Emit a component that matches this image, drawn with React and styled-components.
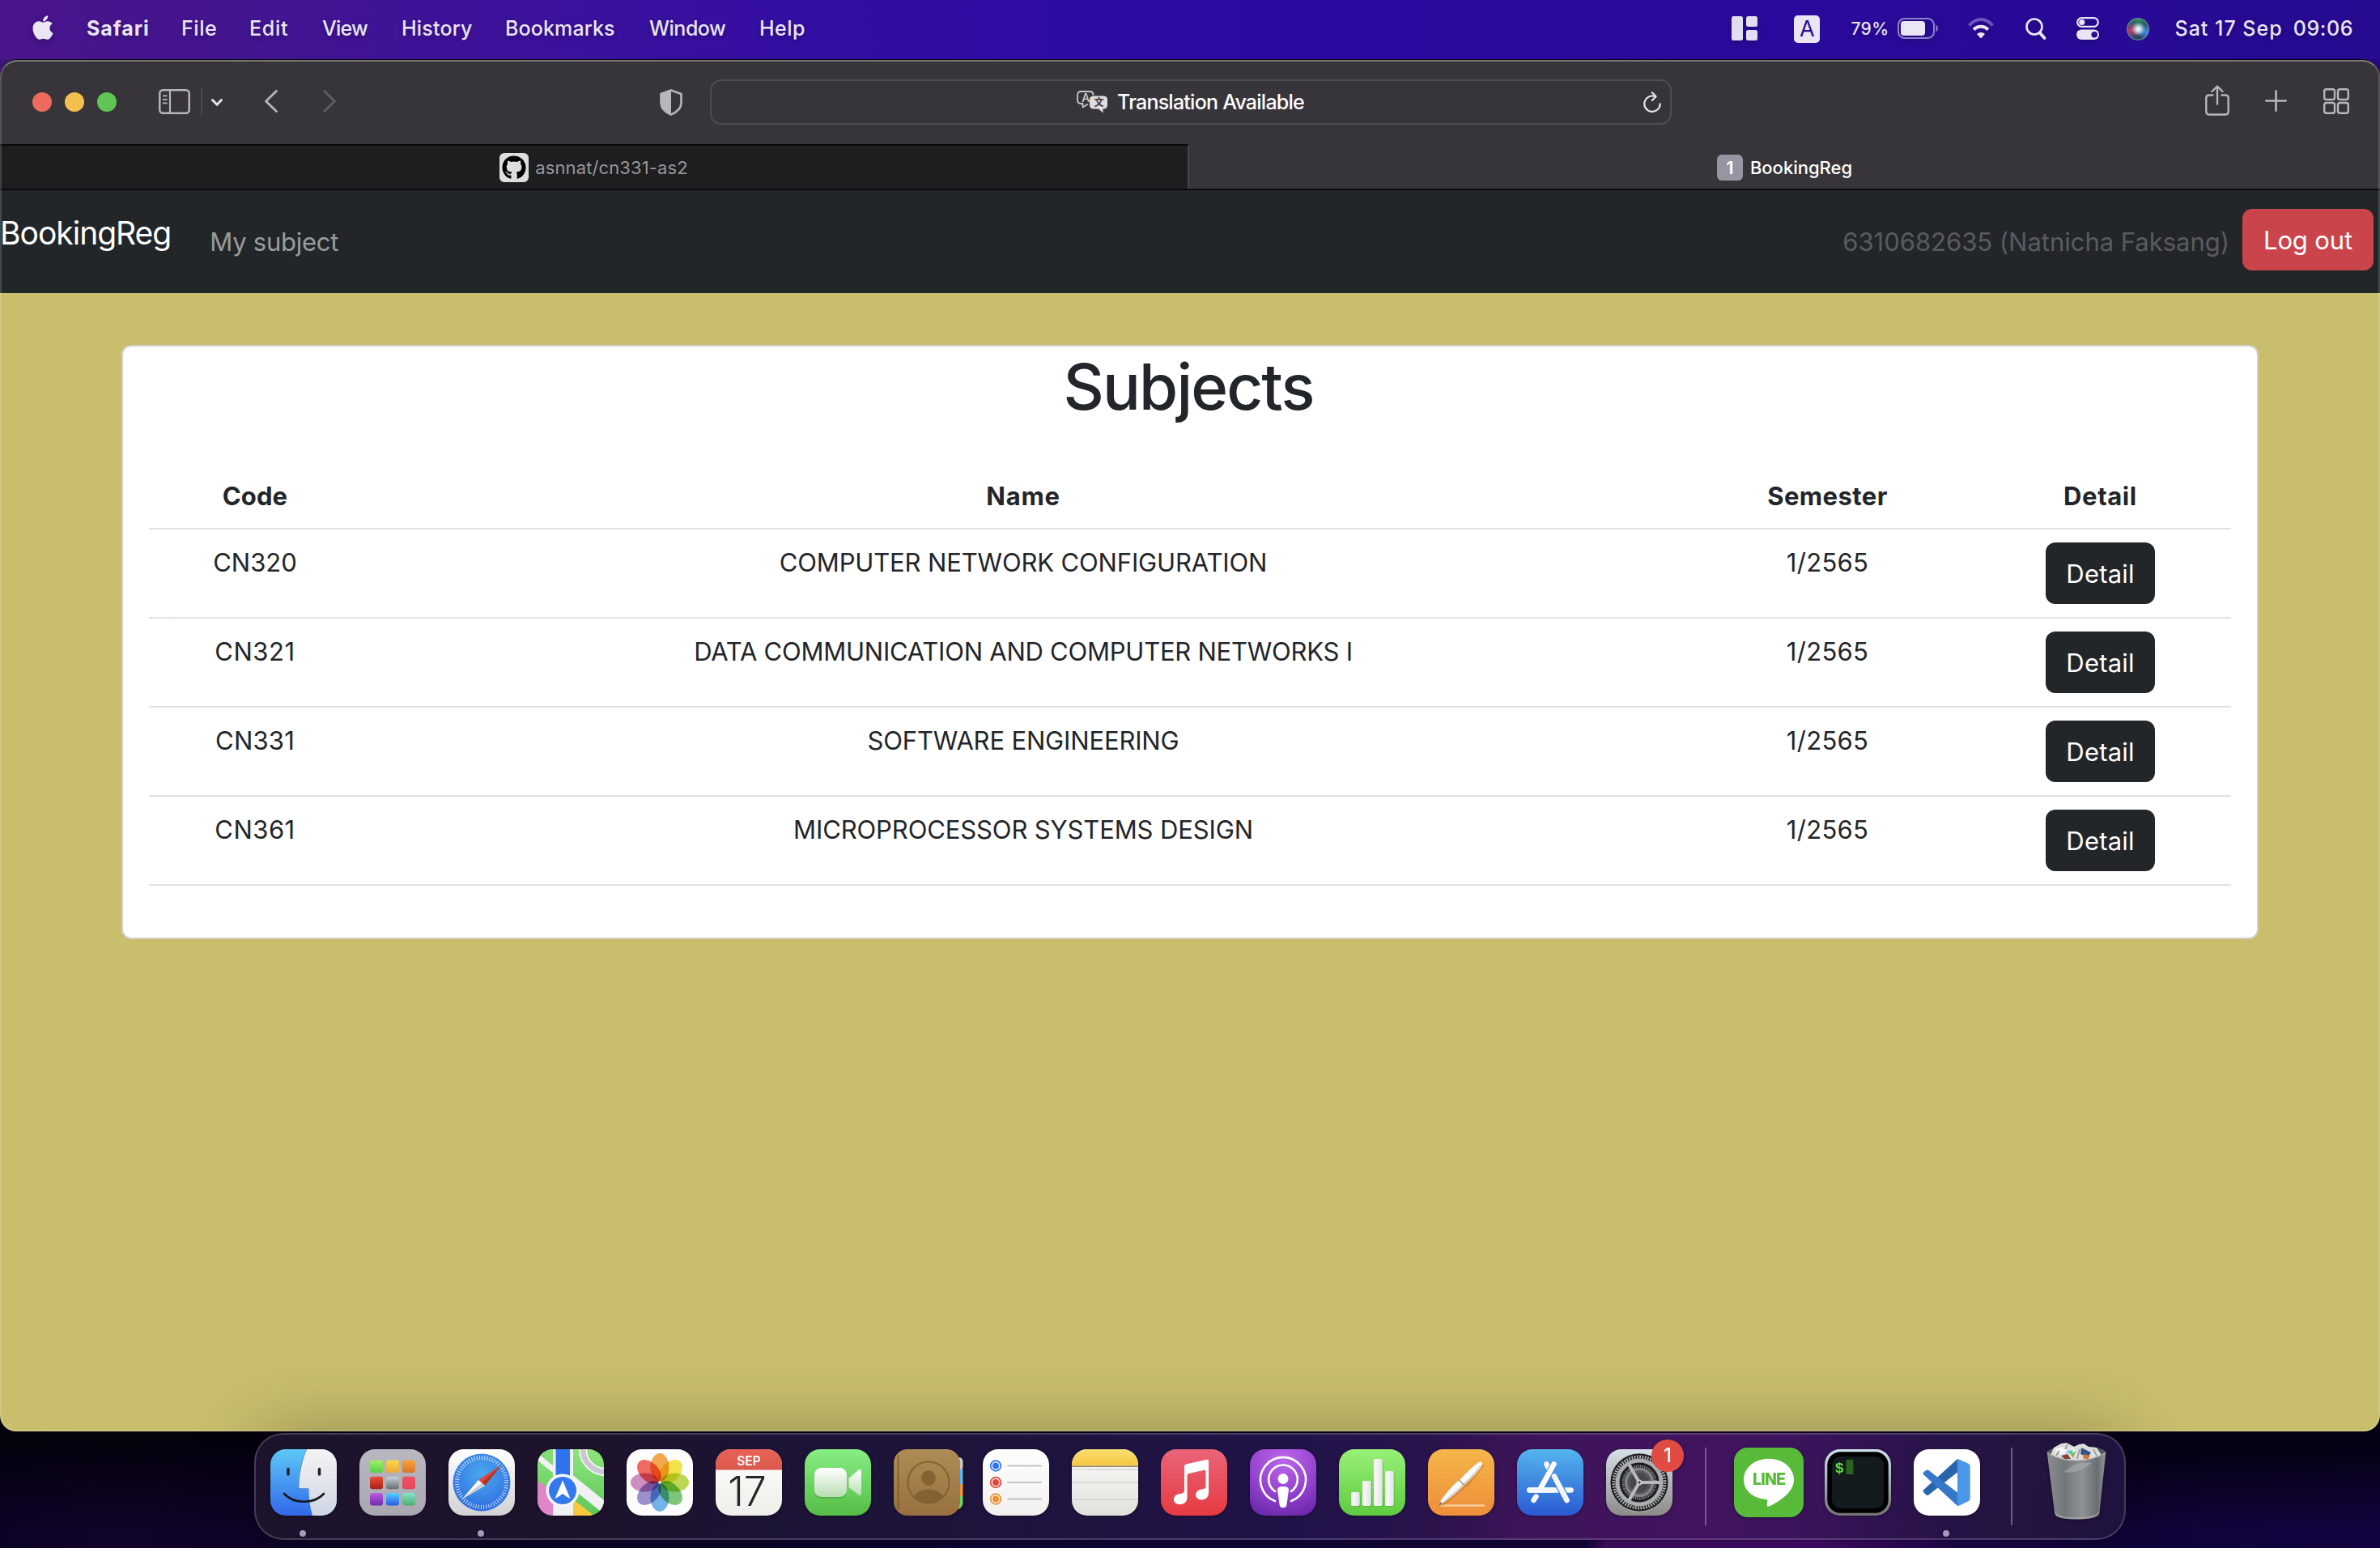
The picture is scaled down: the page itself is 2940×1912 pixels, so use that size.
import React from "react";
import styled, { createGlobalStyle, css } from "styled-components";
import { FaApple, FaGithub } from "react-icons/fa";

const GlobalStyle = createGlobalStyle`
  *, *::before, *::after { box-sizing: border-box; }
  html, body { margin: 0; padding: 0; background: #07021a; }
  body { font-family: Inter, "Liberation Sans", sans-serif; }
  svg { display: block; overflow: visible; flex: none; }
`;

/* ---------- Desktop ---------- */

const Desktop = styled.div`
  width: 2940px;
  height: 1912px;
  overflow: hidden;
  display: flex;
  flex-direction: column;
  background:
    linear-gradient(180deg, rgba(2, 1, 6, 0.8) 0, rgba(2, 1, 6, 0.75) 50px, rgba(2, 1, 6, 0) 150px) 0 1740px / 100% 172px no-repeat,
    linear-gradient(90deg, #0c0226 0, #100428 120px, #0c0226 600px, #0c022c 900px, #130539 1400px, #14053c 1960px, #440c66 1985px, #430c68 2250px, #1d064a 2420px, #110439 2600px, #120340 2940px) 0 1740px / 100% 172px no-repeat,
    linear-gradient(90deg, #3d1476 0, #2a0b8a 50%, #27087f 100%);
`;

const MenuBar = styled.header`
  flex: 0 0 73px;
  padding: 0 33px 3px 39px;
  display: flex;
  align-items: center;
  background: linear-gradient(90deg, #49158d 0, #43158f 260px, #3c129b 640px, #330ea3 1020px, #2d0aa4 1400px, #2a0a9c 2200px, #260a90 2940px);
  color: #ebe6f6;
  text-shadow: 0 3px 6px rgba(0, 0, 0, 0.25);
`;

const AppleMark = styled(FaApple)`
  width: 28px;
  height: 34px;
  margin: 0 40px 2px 0;
  filter: drop-shadow(0 3px 4px rgba(0, 0, 0, 0.25));
`;

const MenuItem = styled.span`
  width: ${(p) => p.$width}px;
  font-size: 25px;
  font-weight: ${(p) => (p.$bold ? 700 : 500)};
  letter-spacing: ${(p) => p.$track || 0}px;
  white-space: nowrap;
`;

const StatusItems = styled.div`
  margin-left: auto;
  display: flex;
  align-items: center;
`;

const StatusItem = styled.div`
  margin-left: ${(p) => p.$gap || 0}px;
  display: flex;
  align-items: center;
  white-space: pre;
  font-weight: 500;
  font-size: ${(p) => p.$size || 25}px;
  letter-spacing: ${(p) => p.$track || 0}px;
  svg { filter: drop-shadow(0 3px 4px rgba(0, 0, 0, 0.22)); }
`;

const InputBadge = styled.span`
  width: 32px;
  height: 34px;
  margin-top: 1px;
  border-radius: 5px;
  background: #e9e5f5;
  color: #2a0a92;
  font-size: 27px;
  font-weight: 400;
  line-height: 34px;
  text-align: center;
  text-shadow: none;
`;

const SiriOrb = styled.span`
  width: 28px;
  height: 28px;
  margin-top: 2px;
  border-radius: 50%;
  background:
    radial-gradient(circle at 52% 50%, #fff 0, rgba(220, 245, 255, 0.85) 14%, rgba(160, 220, 235, 0) 42%),
    radial-gradient(circle at 20% 55%, rgba(225, 60, 110, 0.9) 0, rgba(225, 60, 110, 0) 38%),
    radial-gradient(circle at 85% 62%, rgba(70, 140, 240, 0.95) 0, rgba(70, 140, 240, 0) 35%),
    radial-gradient(circle at 50% 10%, rgba(50, 140, 100, 0.9) 0, rgba(50, 140, 100, 0) 50%),
    #24455f;
  box-shadow: inset 0 0 0 1.5px rgba(120, 170, 170, 0.55);
`;

/* ---------- Browser window ---------- */

const Window = styled.main`
  position: relative;
  flex: 0 0 1695px;
  display: flex;
  flex-direction: column;
  overflow: hidden;
  border-top: 1px solid #08040f;
  border-radius: 22px 22px 20px 20px;
  background: #c8be6c;

  &::after {
    content: "";
    position: absolute;
    inset: 0;
    pointer-events: none;
    border: 2px solid rgba(255, 255, 255, 0.16);
    border-top-color: rgba(255, 255, 255, 0.33);
    border-radius: 22px 22px 20px 20px;
  }
`;

const Toolbar = styled.div`
  flex: 0 0 104px;
  display: flex;
  align-items: center;
  background: #38353a;
`;

const ToolGroup = styled.div`
  flex: 1 1 0;
  min-width: 0;
  display: flex;
  align-items: center;
  justify-content: ${(p) => (p.$end ? "flex-end" : "flex-start")};
  padding: ${(p) => (p.$end ? "0 38px 0 0" : "0 0 0 40px")};
  color: #b9b6bb;
`;

const TrafficLight = styled.span`
  width: 24px;
  height: 24px;
  margin-right: 16px;
  border-radius: 50%;
  background: ${(p) => p.$color};
`;

const Tool = styled.span`
  display: flex;
  margin-left: ${(p) => p.$gap || 0}px;
  margin-top: ${(p) => p.$drop || 0}px;
  color: ${(p) => p.$color || "inherit"};
`;

const Rule = styled.span`
  width: 2px;
  height: 36px;
  margin-left: 13px;
  background: #49464c;
`;

const AddressField = styled.div`
  flex: 0 0 1188px;
  height: 56px;
  padding-right: 11px;
  border: 2px solid #4f4c52;
  border-radius: 14px;
  display: grid;
  grid-template-columns: 1fr auto 1fr;
  align-items: center;
  color: #e6e5e7;

  > :last-child { justify-self: end; }
`;

const AddressText = styled.span`
  grid-column: 2;
  margin-left: 10px;
  display: flex;
  align-items: center;
  gap: 12px;
  font-size: 25px;
  font-weight: 500;
  letter-spacing: -0.76px;
  color: #fff;
`;

const TabStrip = styled.div`
  flex: 0 0 57px;
  display: flex;
  background: #38353a;
  border-bottom: 2px solid #0a090b;
`;

const Tab = styled.div`
  flex: 0 0 ${(p) => (p.$inactive ? 1469 : 1471)}px;
  display: flex;
  align-items: center;
  justify-content: center;
  gap: 9px;
  padding-top: 3px;
  font-size: 22px;
  font-weight: 500;
  color: #fff;

  ${(p) =>
    p.$inactive &&
    css`
      gap: 8px;
      padding-top: 1px;
      background: #1e1d1f;
      border-top: 2px solid #0a090b;
      border-right: 2px solid #48454b;
      font-weight: 400;
      color: #98979a;
      letter-spacing: 0.12px;
    `}
`;

const Favicon = styled.span`
  width: 36px;
  height: 36px;
  border-radius: 6px;
  background: #dedede;
  color: #000;
  display: grid;
  place-items: center;
  svg { width: 30px; height: 30px; }
`;

const TabNumber = styled.span`
  width: 32px;
  height: 32px;
  border-radius: 6px;
  background: #9795a2;
  font-size: 22px;
  font-weight: 600;
  line-height: 32px;
  text-align: center;
`;

/* ---------- Page ---------- */

const NavBar = styled.nav`
  flex: 0 0 127px;
  padding: 0 8px 0 0;
  display: flex;
  align-items: center;
  background: #232629;
`;

const Brand = styled.a`
  padding-bottom: 22px;
  font-size: 39px;
  letter-spacing: -1px;
  color: #fff;
`;

const NavLink = styled.a`
  margin-left: ${(p) => (p.$push ? "auto" : "48px")};
  font-size: 31px;
  letter-spacing: ${(p) => p.$track}px;
  color: ${(p) => (p.$muted ? "#595c5e" : "#9a9c9d")};
`;

const Button = styled.button`
  height: 76px;
  width: ${(p) => p.$width}px;
  padding: 0;
  border: 0;
  border-radius: 12px;
  background: ${(p) => (p.$danger ? "#ca444b" : "#222629")};
  color: #fff;
  font: 400 31px Inter, "Liberation Sans", sans-serif;
  letter-spacing: ${(p) => p.$track}px;
`;

const Page = styled.section`
  flex: 1;
  padding: 64px 150px 0;
`;

const Card = styled.div`
  height: 734px;
  padding: 2px 32px 0;
  border: 2px solid #d0d1cd;
  border-radius: 12px;
  background: #fff;
  color: #222529;
`;

const Title = styled.h1`
  margin: 0 0 46px;
  font-size: 78px;
  font-weight: 500;
  line-height: 96px;
  letter-spacing: -1.85px;
  text-indent: -4px;
  text-align: center;
`;

const Row = styled.div`
  display: grid;
  grid-template-columns: 262fr 1636fr 351fr 323fr;
  height: ${(p) => (p.$head ? 82 : 110)}px;
  padding-top: ${(p) => (p.$head ? 17 : 16)}px;
  border-bottom: 2px solid #dee1e6;
  font-size: 31px;
  line-height: 48px;
  font-weight: ${(p) => (p.$head ? 700 : 400)};
  text-align: center;
`;

const Cell = styled.div`
  padding-top: ${(p) => (p.$flush ? 0 : 1)}px;
  letter-spacing: ${(p) => p.$track || 0}px;
`;

const HeadCell = styled.div`
  letter-spacing: ${(p) => p.$track || 0}px;
`;

/* ---------- Dock ---------- */

const Dock = styled.footer`
  position: relative;
  z-index: 1;
  width: 2312px;
  height: 132px;
  margin: 2px auto 0;
  padding: 18px 18px 0;
  display: flex;
  align-items: flex-start;
  gap: 28px;
  border: 2px solid rgba(170, 150, 200, 0.3);
  border-radius: 36px;
  background: linear-gradient(92deg, #1d132c 0, #1d132c 18%, #1c1435 28%, #1f1340 45%, #211349 56%, #2b134c 63%, #3d1459 68%, #42145f 78%, #3c145d 82%, #2a134b 89%, #231440 94%, #20123e 100%);
  box-shadow: 0 0 90px rgba(0, 0, 0, 0.26), 0 0 2px #000;
`;

const DockItem = styled.div`
  position: relative;
  width: 82px;
  height: 82px;
  filter: drop-shadow(0 1px 2px rgba(0, 0, 0, 0.35));

  ${(p) =>
    p.$running &&
    css`
      &::after {
        content: "";
        position: absolute;
        left: 36px;
        top: 100px;
        width: 8px;
        height: 8px;
        border-radius: 50%;
        background: #a697bd;
      }
    `}
`;

const DockRule = styled.span`
  width: 2px;
  height: 96px;
  margin: -2px ${(p) => p.$right}px 0 ${(p) => p.$left}px;
  background: rgba(190, 150, 225, 0.5);
`;

const Badge = styled.span`
  position: absolute;
  left: 56px;
  top: -12px;
  width: 40px;
  height: 40px;
  border-radius: 50%;
  background: #e04c43;
  color: #fff;
  font-size: 24px;
  font-weight: 500;
  line-height: 40px;
  text-align: center;
`;

/* ---------- Dock artwork, each on an 82 × 82 tile ---------- */

const Art = ({ id, children, clip }) => (
  <svg width="82" height="82" viewBox="0 0 82 82">
    <defs>
      <clipPath id={id + "-clip"}>
        <rect width="82" height="82" rx="19" />
      </clipPath>
    </defs>
    {clip === false ? children : <g clipPath={`url(#${id}-clip)`}>{children}</g>}
  </svg>
);

const Grad = ({ id, from, to, x2 = 0, y2 = 1 }) => (
  <linearGradient id={id} x1="0" y1="0" x2={x2} y2={y2}>
    <stop offset="0" stopColor={from} />
    <stop offset="1" stopColor={to} />
  </linearGradient>
);

const Tile = ({ fill }) => <rect width="82" height="82" fill={fill} />;

const FinderArt = () => (
  <Art id="finder">
    <Grad id="fi-a" from="#5cc8f8" to="#3268ea" />
    <Grad id="fi-b" from="#f3f3f5" to="#cfd6e2" />
    <Tile fill="url(#fi-a)" />
    <path d="M45 0C39 14 35.500 31 35 46Q35 48.500 37 48.500H47.500C47.500 61 49 72 52 82H82V0Z" fill="url(#fi-b)" />
    <path d="M44.500 0C38.500 14 35 31 34.800 48.500H47" fill="none" stroke="rgba(60,90,140,.35)" strokeWidth="1" />
    <path d="M22 24.500V31M60.500 24.500V31" stroke="#20242c" strokeWidth="3.600" strokeLinecap="round" />
    <path d="M17 55C29 68 54 68 66 55" fill="none" stroke="#15181d" strokeWidth="2.600" strokeLinecap="round" />
  </Art>
);

const LAUNCH = [
  ["#a2f06f", "#55cf43"], ["#fbd74f", "#eda732"], ["#f3a43a", "#dc7428"],
  ["#e8503c", "#a81d16"], ["#c9d3da", "#6b6e70"], ["#ee4f66", "#e6485a"],
  ["#bb5fe0", "#7029b0"], ["#53d5fb", "#2a58e6"], ["#86e3cf", "#4fae70"],
];
const LaunchpadArt = () => (
  <Art id="launch">
    <Grad id="la" from="#b9b7bf" to="#a9a7b0" />
    <Tile fill="url(#la)" />
    {LAUNCH.map(([a, b], i) => (
      <g key={a}>
        <Grad id={"la" + i} from={a} to={b} />
        <rect x={13 + (i % 3) * 20} y={13.500 + Math.floor(i / 3) * 20.200} width="16" height="15.500" rx="3.200" fill={`url(#la${i})`} />
      </g>
    ))}
  </Art>
);

const SafariArt = () => (
  <Art id="safari">
    <Grad id="sa-a" from="#ffffff" to="#d2d2d4" />
    <radialGradient id="sa-b" cx=".5" cy=".35" r=".65">
      <stop offset="0" stopColor="#4aa9ee" />
      <stop offset="1" stopColor="#2f6de0" />
    </radialGradient>
    <Tile fill="url(#sa-a)" />
    <circle cx="41" cy="41" r="35.500" fill="url(#sa-b)" />
    <circle cx="41" cy="41" r="30.500" fill="none" stroke="#e4f1fd" strokeWidth="5" strokeDasharray="1 2.194" opacity=".85" />
    <path d="M65.500 19.500L37 38L45 45Z" fill="#e0463a" />
    <path d="M65.500 19.500L41 41.500L45 45Z" fill="#b5312a" />
    <path d="M17 61.500L37 38L45 45Z" fill="#fff" />
    <path d="M17 61.500L41 41.500L45 45Z" fill="#c9ced6" />
  </Art>
);

const MapsArt = () => (
  <Art id="maps">
    <Grad id="ma" from="#8ee47c" to="#5dc75a" />
    <Tile fill="url(#ma)" />
    <path d="M-1 11L82 78V61L-1 -6Z" fill="#f1f1f4" transform="translate(0 2)" />
    <path d="M-2 -2H20V21L-2 3Z" fill="#7fdd74" />
    <path d="M-2 38L19 52V82H-2Z" fill="#df86c8" />
    <path d="M19 0H44V82H19Z" fill="#f1f1f4" />
    <path d="M44 62L70 82H44Z" fill="#f6c93f" />
    <path d="M22.500 0H40V45H22.500Z" fill="#2f74ee" />
    <circle cx="84" cy="0" r="28" fill="none" stroke="#fff" strokeWidth="10" />
    <circle cx="84" cy="0" r="28" fill="none" stroke="#c9c9d2" strokeWidth="7" />
    <circle cx="31" cy="51" r="20.500" fill="#f5f6fa" />
    <circle cx="31" cy="51" r="17" fill="#3478ee" />
    <path d="M31 38.500L40.500 61Q36 59 31 55Q26 59 21.500 61Z" fill="#fff" />
  </Art>
);

const PETALS = ["#f59a2f", "#f2df2f", "#b5d334", "#67bf62", "#5aa7e4", "#8a7fc4", "#c77bb8", "#ee5148"];
const Petal = styled.ellipse`
  mix-blend-mode: multiply;
`;
const PhotosArt = () => (
  <Art id="photos">
    <Tile fill="#fdfdfd" />
    {PETALS.map((c, i) => (
      <Petal key={c} cx="41" cy="22.500" rx="11.500" ry="17.500" fill={c} opacity=".85" transform={`rotate(${i * 45} 41 41)`} />
    ))}
    <circle cx="41" cy="41" r="1.800" fill="#dfe9e4" />
  </Art>
);

const CalendarArt = () => (
  <Art id="cal">
    <Grad id="ca-a" from="#fdfdfc" to="#f0eeea" />
    <Grad id="ca-b" from="#ea6257" to="#d9584c" />
    <Tile fill="url(#ca-a)" />
    <rect width="82" height="25.500" fill="url(#ca-b)" />
    <text x="41" y="19.500" fontFamily="Inter" fontSize="15.500" fontWeight="600" fill="#fff" textAnchor="middle">SEP</text>
    <text x="39" y="69.500" fontFamily="Inter" fontSize="50" fontWeight="300" fill="#28282a" textAnchor="middle">17</text>
  </Art>
);

const FaceTimeArt = () => (
  <Art id="ft">
    <Grad id="ft-a" from="#86ee83" to="#55bd45" />
    <Grad id="ft-b" from="#ffffff" to="#b8ddb3" />
    <Tile fill="url(#ft-a)" />
    <rect x="12" y="25" width="40" height="36" rx="8.500" fill="rgba(30,110,30,.25)" />
    <rect x="12" y="23" width="40" height="36" rx="8.500" fill="url(#ft-b)" />
    <path d="M54.500 36L66 26Q70 23.500 70 27.500V54.500Q70 58.500 66 56L54.500 47Z" fill="url(#ft-b)" />
  </Art>
);

const ContactsArt = () => (
  <Art id="con" clip={false}>
    <Grad id="co" from="#ae8c55" to="#98703f" />
    <rect x="60" y="10" width="25.500" height="17" rx="5" fill="#c9c9cb" />
    <rect x="60" y="25" width="25.500" height="19" fill="#5fb6ef" />
    <rect x="60" y="43" width="25.500" height="15" fill="#ee9438" />
    <path d="M60 58H85.500V66Q85 72 80 74H60Z" fill="#6bd763" />
    <rect width="82" height="82" rx="17" fill="url(#co)" />
    <path d="M5.500 7V75" stroke="rgba(90,60,20,.5)" strokeWidth="1.600" />
    <circle cx="43" cy="41" r="25.500" fill="none" stroke="#856232" strokeWidth="2" />
    <ellipse cx="43" cy="35.500" rx="8.800" ry="9.500" fill="#856232" />
    <path d="M25 58Q31 49.500 43 49.500T61 58Q53 66.500 43 66.500T25 58Z" fill="#856232" />
  </Art>
);

const RemindersArt = () => (
  <Art id="rem">
    <Grad id="re" from="#ffffff" to="#f1f0ee" />
    <Tile fill="url(#re)" />
    {[["#2f73ee", 20.500], ["#e2463c", 41], ["#e8922f", 61.500]].map(([c, y]) => (
      <g key={c}>
        <circle cx="16" cy={y} r="6.300" fill="none" stroke={c} strokeWidth="1.700" />
        <circle cx="16" cy={y} r="4" fill={c} />
        <path d={`M30.500 ${y}H73`} stroke="#b3b6b8" strokeWidth="1.400" />
      </g>
    ))}
  </Art>
);

const NotesArt = () => (
  <Art id="notes">
    <Grad id="no-a" from="#f9df73" to="#f7c640" />
    <Grad id="no-b" from="#fafaf9" to="#e1e1db" />
    <Tile fill="url(#no-b)" />
    <rect width="82" height="20.500" fill="url(#no-a)" />
    <rect y="20.500" width="82" height="1.500" fill="#8d8468" />
    <path d="M1 25H82" stroke="#bdbdb9" strokeWidth="1.600" strokeDasharray="1.500 1.700" />
    <path d="M0 41H82M0 62H82" stroke="#d2d2d0" strokeWidth="1.500" />
  </Art>
);

const MusicArt = () => (
  <Art id="music">
    <Grad id="mu" from="#ea6479" to="#e63a40" />
    <Tile fill="url(#mu)" />
    <path d="M29 21.500Q29 19.200 31.200 18.600L56.500 12.800Q59 12.300 59 14.800V53.500C59 59 55.500 62.500 50.500 62.500C46 62.500 43.200 60 43.200 56.500C43.200 52.500 46 50.200 50 49.500C54 48.800 55.500 48.300 55.500 45.500V27.500Q55.500 25.200 53.500 25.700L34.500 30Q32.500 30.500 32.500 32.500V59.500C32.500 65 28.500 68.200 23.500 68.200C19 68.200 16 65.500 16 62C16 58 19 55.800 23 55.200C27 54.500 29 54 29 50.500Z" fill="#fff" />
  </Art>
);

const PodcastsArt = () => (
  <Art id="pod">
    <radialGradient id="po" cx=".5" cy=".15" r=".9">
      <stop offset="0" stopColor="#bb66ea" />
      <stop offset=".5" stopColor="#9a48d3" />
      <stop offset="1" stopColor="#6c28ab" />
    </radialGradient>
    <Tile fill="url(#po)" />
    <g fill="none" stroke="#fff" strokeWidth="2.600" strokeLinecap="round">
      <path d="M31 64A28 28 0 1 1 51 64" />
      <path d="M31 52A17.800 17.800 0 1 1 51 52" />
    </g>
    <circle cx="41" cy="36.500" r="6.500" fill="#fff" />
    <path d="M34 50Q34 46 41 46T48 50L45.500 68Q45 72.300 41 72.300T36.500 68Z" fill="#fff" />
  </Art>
);

const NumbersArt = () => (
  <Art id="num">
    <Grad id="nu-a" from="#98f078" to="#5fcb40" />
    <Grad id="nu-b" from="#fdfdfd" to="#e2e4e6" x2="1" y2="0" />
    <Tile fill="url(#nu-a)" />
    {[[15, 53], [29, 39], [43, 12], [57, 27]].map(([x, y]) => (
      <g key={x}>
        <rect x={x + 1} y={y + 1} width="10.700" height={70 - y} rx="2" fill="rgba(30,110,20,.25)" />
        <rect x={x} y={y} width="10.700" height={70 - y} rx="2" fill="url(#nu-b)" />
      </g>
    ))}
  </Art>
);

const PagesArt = () => (
  <Art id="pages">
    <Grad id="pa" from="#f4b649" to="#ef8e3a" />
    <Tile fill="url(#pa)" />
    <path d="M17 69.500H69" stroke="#f8cf9c" strokeWidth="2.400" strokeLinecap="round" />
    <path d="M17 69L50 42L68 19" fill="none" stroke="rgba(150,70,10,.25)" strokeWidth="4" />
    <path d="M13 69.500L16 63Q28 46 40 37Q54 22 62 16.500Q68 13.500 67 19Q62 29 46 43Q32 58 19 66Z" fill="#fbfbfb" />
    <path d="M13 69.500L19 66Q32 58 46 43Q62 29 67 17Q58 29 44 42Q31 55 13 69.500Z" fill="#d3d0ce" />
    <path d="M38.500 38L44 44" stroke="#9a9590" strokeWidth="1.500" />
    <path d="M13 69.500L15.200 65L17.600 67.500Z" fill="#6c655e" />
  </Art>
);

const AppStoreArt = () => (
  <Art id="store">
    <Grad id="st" from="#53b5ee" to="#2a59d2" />
    <Tile fill="url(#st)" />
    <g fill="none" stroke="#f4f7fb" strokeWidth="6.600" strokeLinecap="round">
      <path d="M36.500 18.500L41 27" />
      <path d="M15.500 50.500H66.500" />
      <path d="M23.500 58.500L20.500 63" />
    </g>
    <path d="M45.500 18.500L29 48" stroke="#3f8ee4" strokeWidth="8.500" fill="none" />
    <path d="M45.500 18.500L29.500 47.500" stroke="#fff" strokeWidth="6.600" strokeLinecap="round" fill="none" />
    <path d="M15.500 50.500H44" stroke="#f4f7fb" strokeWidth="6.600" strokeLinecap="round" />
    <path d="M46.500 34.500L61.500 63" stroke="#3c78e0" strokeWidth="9" />
    <path d="M46 33.500L61.500 63" stroke="#f4f7fb" strokeWidth="6.600" strokeLinecap="round" />
  </Art>
);

const SettingsArt = () => (
  <Art id="set">
    <Grad id="se" from="#d6e0e8" to="#8e8a87" />
    <Tile fill="url(#se)" />
    <circle cx="41" cy="41" r="36" fill="#1d1e1f" />
    <circle cx="41" cy="41" r="31.500" fill="none" stroke="#b4b7b8" strokeWidth="4" strokeDasharray="1.700 1.600" />
    <circle cx="41" cy="41" r="27" fill="none" stroke="#a9adaf" strokeWidth="5" />
    <circle cx="41" cy="41" r="20" fill="none" stroke="#85888a" strokeWidth="3" strokeDasharray="1.400 1.300" />
    <circle cx="41" cy="41" r="16.500" fill="#55585a" stroke="#808486" strokeWidth="3.500" />
    <circle cx="41" cy="41" r="11.500" fill="#454749" />
    {[0, 120, 240].map((a) => (
      <path key={a} d="M41 41H66" stroke="#b7bbbd" strokeWidth="4" transform={`rotate(${a} 41 41)`} />
    ))}
    <circle cx="41" cy="41" r="3.500" fill="#c4c8ca" />
    <circle cx="41" cy="41" r="1.500" fill="#333" />
    <circle cx="41" cy="41" r="36" fill="none" stroke="rgba(235,235,235,.5)" strokeWidth="1" />
  </Art>
);

const LineArt = () => (
  <Art id="line" clip={false}>
    <rect x="-2" y="-2" width="86" height="86" rx="17" fill="#57bb39" />
    <path d="M41 11.700C58.500 11.700 72 23 72 37.500C72 44 69.500 49 65 54C59 61 47 68.500 40.500 70.800C37.500 71.500 39.500 66 39.200 63.500C39 62 37 61.800 34.500 61.500C20 59.500 10 50 10 37.500C10 23 23.500 11.700 41 11.700Z" fill="#fff" />
    <text x="41.500" y="44.300" fontFamily="Inter" fontSize="19.500" fontWeight="800" fill="#57bb39" textAnchor="middle" textLength="41">LINE</text>
  </Art>
);

const TerminalArt = () => (
  <Art id="term" clip={false}>
    <Grad id="te" from="#cfe2ee" to="#757475" />
    <rect width="82" height="82" rx="19" fill="url(#te)" />
    <rect x="3.300" y="3.300" width="75.400" height="75.400" rx="16" fill="#000" />
    <rect x="9" y="9" width="64" height="64" rx="10" fill="#141b1f" />
    <text x="12.500" y="29" fontFamily="Liberation Mono" fontSize="19" fontWeight="700" fill="#5fdc3f">$</text>
    <rect x="26.500" y="13" width="8.800" height="18" fill="#2b641f" />
  </Art>
);

const CodeArt = () => (
  <Art id="code">
    <Tile fill="#fff" />
    <path d="M54 12L11.800 50.500Q11 52 12.500 53.500L15.500 56.500Q17 57.500 19 56L54 28.500Z" fill="#2866ac" />
    <path d="M54 70L11.800 31Q11 29.500 12.500 28L15.500 26Q17 25 19 26.500L54 53.500Z" fill="#3577c9" />
    <path d="M54 12.500Q54.500 12 56 12.500L68 18Q69.700 19 69.700 21V61Q69.700 63 68 64L56 69.700Q54.500 70.500 54 69.500Z" fill="#4a97ea" />
  </Art>
);

const TrashArt = () => (
  <Art id="trash" clip={false}>
    <linearGradient id="tr-b" x1="0" x2="1" y1="0" y2="0">
      <stop offset="0" stopColor="#8b8e90" />
      <stop offset=".3" stopColor="#74777a" />
      <stop offset=".6" stopColor="#8f9294" />
      <stop offset=".85" stopColor="#6b6e70" />
      <stop offset="1" stopColor="#949799" />
    </linearGradient>
    <ellipse cx="41" cy="4" rx="36.300" ry="8" fill="#55585a" />
    <path d="M9 7L13 -2L22 -7L29 -8L38 -3L44 -6L50 -7L56 -3L66 -2L71 6L68 14H12Z" fill="#dcdddd" />
    <path d="M14 0L24 -3L30 2L22 7ZM34 -2L40 1L36 6Z" fill="#f7f7f7" />
    <path d="M22 8L30 6L34 12H26Z" fill="#8c3a34" />
    <path d="M28 3L37 1L35 6Z" fill="#49c6d0" />
    <path d="M33 5L40 3L37 11Z" fill="#7cc153" />
    <path d="M47 -2L59 4L55 10L46 6Z" fill="#37538c" />
    <path d="M50 6L58 8L55 13L49 11Z" fill="#d57a31" />
    <path d="M16 8L20 2M62 0L66 8M42 12L45 0M30 -6L27 0" stroke="#8c8e90" strokeWidth="1.500" />
    <path d="M4.700 4Q20 14 41 14T77.300 4L69.500 78Q68.500 86.500 41 86.500T14 78Z" fill="url(#tr-b)" />
    <path d="M14 76Q16 84 41 84T69.500 76L69.300 79Q67 86.500 41 86.500T14.200 79Z" fill="#b3b6b8" opacity=".5" />
    <path d="M25 28Q42 32 60 17Q52 16 40 18Z" fill="#b0b3b5" opacity=".5" />
    <path d="M4.700 4Q20 14 41 14T77.300 4" fill="none" stroke="#a9acae" strokeWidth="1.200" />
  </Art>
);

/* ---------- Menu bar and toolbar icons ---------- */

const LayoutIcon = () => (
  <svg width="32" height="30" viewBox="0 0 32 30" fill="#e2def2">
    <rect width="14" height="30" rx="2.500" />
    <rect x="18" width="14" height="13" rx="2.500" />
    <rect x="18" y="17" width="14" height="13" rx="2.500" />
  </svg>
);

const BatteryIcon = () => (
  <svg width="50" height="26" viewBox="0 0 50 26">
    <rect x="1" y="1" width="44" height="24" rx="7.500" fill="none" stroke="#8f7fce" strokeWidth="2" />
    <rect x="4" y="4" width="30" height="18" rx="4" fill="#ebe6f6" />
    <path d="M47.500 8.500Q50 10 50 13T47.500 17.500Z" fill="#8f7fce" />
  </svg>
);

const WifiIcon = () => (
  <svg width="32" height="26" viewBox="0 0 32 26" fill="none">
    <path d="M1.500 9.500Q8 2 16 2T30.500 9.500" stroke="#6d53bd" strokeWidth="3.800" />
    <path d="M7 14.500Q11 10.800 16 10.800T25 14.500" stroke="#ebe6f6" strokeWidth="4" />
    <path d="M11 20Q13 18 16 18T21 20L16 25.500Z" fill="#ebe6f6" />
  </svg>
);

const SearchIcon = () => (
  <svg width="26" height="27" viewBox="0 0 26 27" fill="none" stroke="#ebe6f6">
    <circle cx="11" cy="11" r="9.500" strokeWidth="2.600" />
    <path d="M17.800 18.500L23.500 25" strokeWidth="3.800" strokeLinecap="round" />
  </svg>
);

const ControlIcon = () => (
  <svg width="28" height="28" viewBox="0 0 28 28">
    <rect x="1.200" y="1.200" width="25.600" height="10.600" rx="5.300" fill="none" stroke="#ebe6f6" strokeWidth="2.200" />
    <circle cx="6.800" cy="6.500" r="3.600" fill="#ebe6f6" />
    <rect y="15.500" width="28" height="12.500" rx="6.200" fill="#ebe6f6" />
    <circle cx="22.200" cy="21.800" r="3.800" fill="#2a0a9a" />
  </svg>
);

const SidebarIcon = () => (
  <svg width="39" height="31" viewBox="0 0 39 31" fill="none" stroke="currentColor">
    <rect x="1.300" y="1.300" width="36.400" height="28.400" rx="4" strokeWidth="2.500" />
    <path d="M14 1.500V29.500" strokeWidth="2.200" />
    <path d="M5.500 8.300H10M5.500 12.800H10M5.500 17.300H10" strokeWidth="1.700" strokeLinecap="round" />
  </svg>
);

const ChevronDown = () => (
  <svg width="14" height="9" viewBox="0 0 14 9" fill="none" stroke="currentColor" strokeWidth="3" strokeLinecap="round" strokeLinejoin="round">
    <path d="M1.500 1.500L7 7.300L12.500 1.500" />
  </svg>
);

const ChevronLeft = () => (
  <svg width="16" height="28" viewBox="0 0 16 28" fill="none" stroke="currentColor" strokeWidth="2.800" strokeLinecap="round" strokeLinejoin="round">
    <path d="M14.500 1.500L1.500 14L14.500 26.500" />
  </svg>
);

const ChevronRight = () => (
  <svg width="16" height="28" viewBox="0 0 16 28" fill="none" stroke="currentColor" strokeWidth="2.800" strokeLinecap="round" strokeLinejoin="round">
    <path d="M1.500 1.500L14.500 14L1.500 26.500" />
  </svg>
);

const ShieldIcon = () => (
  <svg width="28" height="33" viewBox="0 0 28 33">
    <path d="M14 1.500L26.500 6V17C26.500 24 21 28.500 14 31.500C7 28.500 1.500 24 1.500 17V6Z" fill="none" stroke="currentColor" strokeWidth="2.600" strokeLinejoin="round" />
    <path d="M14 1.500V31.500C7 28.500 1.500 24 1.500 17V6Z" fill="currentColor" />
  </svg>
);

const TranslateIcon = () => (
  <svg width="38" height="28" viewBox="0 0 38 28">
    <path d="M14 16.500L7.500 20.500V16H5.500Q1 16 1 11.500V5.500Q1 1 5.500 1H16Q20.500 1 20.500 5.500" fill="none" stroke="#c9c8cb" strokeWidth="1.800" strokeLinejoin="round" />
    <text x="10.800" y="13.600" fontFamily="Inter" fontSize="14" fontWeight="500" fill="#d5d4d6" textAnchor="middle">A</text>
    <path d="M21 6.500H33Q38 6.500 38 11.500V17.500Q38 22.500 33 22.500H32.500V27.500L27 22.500H21Q16 22.500 16 17.500V11.500Q16 6.500 21 6.500Z" fill="#dddcde" />
    <text x="27" y="19" fontFamily="Noto Sans CJK SC" fontSize="12" fontWeight="700" fill="#38353a" textAnchor="middle">文</text>
  </svg>
);

const ReloadIcon = () => (
  <svg width="22" height="27" viewBox="0 0 22 27" fill="none" stroke="currentColor" strokeWidth="2.200" strokeLinecap="round">
    <path d="M14.500 6.200A9.700 9.700 0 1 0 20.700 15.300" />
    <path d="M10.800 1.300L15.600 6.300L10.800 11" strokeLinejoin="round" />
  </svg>
);

const ShareIcon = () => (
  <svg width="30" height="38" viewBox="0 0 30 38" fill="none" stroke="currentColor" strokeWidth="2.400" strokeLinecap="round">
    <path d="M9.500 12.500H5Q1.300 12.500 1.300 16V32.500Q1.300 36.500 5 36.500H25Q28.700 36.500 28.700 32.500V16Q28.700 12.500 25 12.500H20.500" />
    <path d="M15 23.500V1.800M8.500 8L15 1.500L21.500 8" strokeLinejoin="round" />
  </svg>
);

const PlusIcon = () => (
  <svg width="27" height="27" viewBox="0 0 27 27" fill="none" stroke="currentColor" strokeWidth="2.600" strokeLinecap="round">
    <path d="M13.500 1.300V25.700M1.300 13.500H25.700" />
  </svg>
);

const GridIcon = () => (
  <svg width="32" height="32" viewBox="0 0 32 32" fill="none" stroke="currentColor" strokeWidth="2.400">
    {[[1.200, 1.200], [18, 1.200], [1.200, 18], [18, 18]].map(([x, y]) => (
      <rect key={x + "-" + y} x={x} y={y} width="12.800" height="12.800" rx="2.500" />
    ))}
  </svg>
);

/* ---------- Data ---------- */

const MENUS = [
  { label: "Safari", width: 117, track: 0.96, bold: true },
  { label: "File", width: 84, track: 0.56 },
  { label: "Edit", width: 90, track: 0.72 },
  { label: "View", width: 98, track: -0.76 },
  { label: "History", width: 128, track: 0.2 },
  { label: "Bookmarks", width: 178, track: 0.12 },
  { label: "Window", width: 136, track: -0.51 },
  { label: "Help", width: 60, track: 0.47 },
];

const SUBJECTS = [
  { code: "CN320", name: "COMPUTER NETWORK CONFIGURATION", semester: "1/2565", codeTrack: 0, track: -0.15 },
  { code: "CN321", name: "DATA COMMUNICATION AND COMPUTER NETWORKS I", semester: "1/2565", codeTrack: 0.6, track: -0.24 },
  { code: "CN331", name: "SOFTWARE ENGINEERING", semester: "1/2565", codeTrack: 0.2, track: -0.16 },
  { code: "CN361", name: "MICROPROCESSOR SYSTEMS DESIGN", semester: "1/2565", codeTrack: 0.5, track: -0.12 },
];

const APPS = [
  { art: FinderArt, running: true },
  { art: LaunchpadArt },
  { art: SafariArt, running: true },
  { art: MapsArt },
  { art: PhotosArt },
  { art: CalendarArt },
  { art: FaceTimeArt },
  { art: ContactsArt },
  { art: RemindersArt },
  { art: NotesArt },
  { art: MusicArt },
  { art: PodcastsArt },
  { art: NumbersArt },
  { art: PagesArt },
  { art: AppStoreArt },
  { art: SettingsArt, badge: 1 },
];

const EXTRA_APPS = [{ art: LineArt }, { art: TerminalArt }, { art: CodeArt, running: true }];

const renderApp = ({ art: Picture, running, badge }, i) => (
  <DockItem key={i} $running={running}>
    <Picture />
    {badge && <Badge>{badge}</Badge>}
  </DockItem>
);

export default function App() {
  return (
    <>
      <GlobalStyle />
      <Desktop>
        <MenuBar>
          <AppleMark />
          {MENUS.map((m) => (
            <MenuItem key={m.label} $width={m.width} $track={m.track} $bold={m.bold}>
              {m.label}
            </MenuItem>
          ))}
          <StatusItems>
            <StatusItem><LayoutIcon /></StatusItem>
            <StatusItem $gap={45}><InputBadge>A</InputBadge></StatusItem>
            <StatusItem $gap={38} $size={21} $track={0.4}>79%</StatusItem>
            <StatusItem $gap={10}><BatteryIcon /></StatusItem>
            <StatusItem $gap={37}><WifiIcon /></StatusItem>
            <StatusItem $gap={39}><SearchIcon /></StatusItem>
            <StatusItem $gap={37}><ControlIcon /></StatusItem>
            <StatusItem $gap={34}><SiriOrb /></StatusItem>
            <StatusItem $gap={32} $track={1}>Sat 17 Sep</StatusItem>
            <StatusItem $gap={13} $track={0.6}>09:06</StatusItem>
          </StatusItems>
        </MenuBar>

        <Window>
          <Toolbar>
            <ToolGroup>
              <TrafficLight $color="#ed6a5f" />
              <TrafficLight $color="#f5bf4f" />
              <TrafficLight $color="#61c554" />
              <Tool $gap={36} $drop={-2}><SidebarIcon /></Tool>
              <Rule />
              <Tool $gap={11} $color="#e3e2e4"><ChevronDown /></Tool>
              <Tool $gap={52} $drop={-2}><ChevronLeft /></Tool>
              <Tool $gap={56} $drop={-2} $color="#5f5c62"><ChevronRight /></Tool>
              <Tool $gap={400}><ShieldIcon /></Tool>
            </ToolGroup>
            <AddressField>
              <AddressText>
                <TranslateIcon />
                Translation Available
              </AddressText>
              <Tool><ReloadIcon /></Tool>
            </AddressField>
            <ToolGroup $end>
              <Tool $drop={-5}><ShareIcon /></Tool>
              <Tool $gap={44} $drop={-3}><PlusIcon /></Tool>
              <Tool $gap={45} $drop={-3}><GridIcon /></Tool>
            </ToolGroup>
          </Toolbar>

          <TabStrip>
            <Tab $inactive>
              <Favicon><FaGithub /></Favicon>
              asnnat/cn331-as2
            </Tab>
            <Tab>
              <TabNumber>1</TabNumber>
              BookingReg
            </Tab>
          </TabStrip>

          <NavBar>
            <Brand>BookingReg</Brand>
            <NavLink $track={-0.25}>My subject</NavLink>
            <NavLink $push $muted $track={-0.02}>6310682635 (Natnicha Faksang)</NavLink>
            <Tool $gap={16} $drop={-5}>
              <Button $danger $width={162} $track={-0.13}>Log out</Button>
            </Tool>
          </NavBar>

          <Page>
            <Card>
              <Title>Subjects</Title>
              <Row $head>
                <HeadCell $track={0.1}>Code</HeadCell>
                <HeadCell $track={0.8}>Name</HeadCell>
                <HeadCell $track={0.45}>Semester</HeadCell>
                <HeadCell $track={0.6}>Detail</HeadCell>
              </Row>
              {SUBJECTS.map((s) => (
                <Row key={s.code}>
                  <Cell $track={s.codeTrack}>{s.code}</Cell>
                  <Cell $track={s.track}>{s.name}</Cell>
                  <Cell $track={0.3}>{s.semester}</Cell>
                  <Cell $flush>
                    <Button $width={135} $track={0.2}>Detail</Button>
                  </Cell>
                </Row>
              ))}
            </Card>
          </Page>
        </Window>

        <Dock>
          {APPS.map(renderApp)}
          <DockRule $left={12} $right={8} />
          {EXTRA_APPS.map(renderApp)}
          <DockRule $left={10} $right={10} />
          <DockItem>
            <TrashArt />
          </DockItem>
        </Dock>
      </Desktop>
    </>
  );
}
